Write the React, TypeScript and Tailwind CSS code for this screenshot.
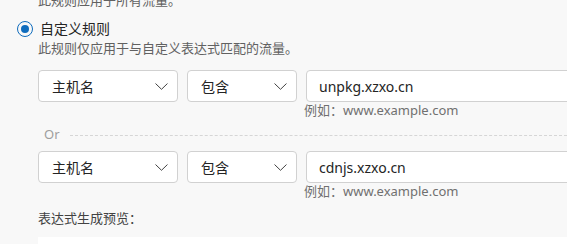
const font = "font-['Segoe_UI','Noto_Sans','Noto_Sans_CJK_SC',sans-serif]";

const Chevron = () => (
  <svg width="13" height="7" viewBox="0 0 13 7" fill="none" className="shrink-0">
    <path d="M0.8 0.8l5.7 5.5 5.7-5.5" stroke="#424242" strokeWidth="1" strokeLinecap="round" strokeLinejoin="round" />
  </svg>
);

const Select = ({ label, width }: { label: string; width: string }) => (
  <div
    className={`${width} h-[32px] shrink-0 flex items-center justify-between pl-[13px] pr-[9px] bg-white border border-[#d1d1d1] rounded-[4px] text-[14px] text-[#242424]`}
  >
    <span>{label}</span>
    <Chevron />
  </div>
);

const Rule = ({ value, top }: { value: string; top: string }) => (
  <div className={top}>
    <div className="flex gap-[9px]">
      <Select label="主机名" width="w-[140px]" />
      <Select label="包含" width="w-[110px]" />
      <div className="w-[300px] h-[32px] shrink-0 flex items-center pl-[12px] bg-white border border-[#d1d1d1] rounded-[4px] text-[14px] text-[#242424]">
        {value}
      </div>
    </div>
    <div className="ml-[266px] h-[16px] leading-[16px] text-[13px] text-[#707070]">
      例如：www.example.com
    </div>
  </div>
);

export default function App() {
  return (
    <div className={`w-[567px] h-[244px] overflow-hidden bg-[#f8f8f8] ${font}`}>
      <p className="-mt-[10px] ml-[38px] h-[20px] leading-[20px] text-[13px] text-[#616161]">
        此规则应用于所有流量。
      </p>

      <div className="mt-[9px] ml-[17px] flex items-center gap-[7px] h-[20px]">
        <span className="w-[16px] h-[16px] rounded-full border-[1.5px] border-[#0f6cbd] flex items-center justify-center">
          <span className="w-[8px] h-[8px] rounded-full bg-[#0f6cbd]" />
        </span>
        <span className="text-[14px] leading-[20px] text-[#242424]">自定义规则</span>
      </div>

      <div className="ml-[38px]">
        <p className="h-[18px] leading-[18px] text-[13px] text-[#616161]">
          此规则仅应用于与自定义表达式匹配的流量。
        </p>

        <Rule value="unpkg.xzxo.cn" top="mt-[13px]" />

        <div className="mt-[9px] flex items-center gap-[10px] h-[16px]">
          <span className="ml-[6px] text-[13px] text-[#9e9e9e]">Or</span>
          <div className="flex-1 border-t border-dashed border-[#d6d6d6]" />
        </div>

        <Rule value="cdnjs.xzxo.cn" top="mt-[8px]" />

        <p className="mt-[9px] h-[20px] leading-[20px] text-[13px] text-[#424242]">表达式生成预览：</p>

        <div className="mt-[9px] h-[30px] bg-white" />
      </div>
    </div>
  );
}
